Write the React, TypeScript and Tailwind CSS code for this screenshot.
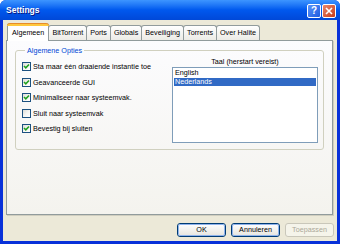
import React from "react";

const font = { fontFamily: '"Liberation Sans", Arial, sans-serif' };

function Check({ checked, label }: { checked: boolean; label: string }) {
  return (
    <div className="flex items-center h-[15.5px]">
      <div className="w-[9px] h-[9px] border border-[#1C5180] bg-gradient-to-br from-[#DCDCD7] via-[#F5F5F2] to-white flex items-center justify-center shrink-0">
        {checked && (
          <svg width="7" height="7" viewBox="0 0 7 7">
            <path d="M1 3 L2.8 4.8 L6 1.5" stroke="#21A121" strokeWidth="1.6" fill="none" />
          </svg>
        )}
      </div>
      <span className="ml-[2px] text-[7.2px] text-black leading-none whitespace-nowrap">{label}</span>
    </div>
  );
}

function Tab({ label, active }: { label: string; active?: boolean }) {
  if (active) {
    return (
      <div className="relative z-10 h-[18px] -mb-[1px] px-[4px] bg-white border-x border-[#919B9C] rounded-t-[3px] flex flex-col">
        <div className="h-[3px] -mx-[5px] bg-[#FFC83C] border-t border-[#E68B2C] rounded-t-[3px]" />
        <div className="flex-1 flex items-center text-[7.2px] text-black leading-none pb-[1px]">{label}</div>
      </div>
    );
  }
  return (
    <div className="h-[15px] px-[3px] bg-gradient-to-b from-white to-[#ECEBE6] border border-b-0 border-[#919B9C] rounded-t-[3px] flex items-center text-[7.2px] text-black leading-none -ml-[1px]">
      {label}
    </div>
  );
}

function Btn({ label, disabled, focus }: { label: string; disabled?: boolean; focus?: boolean }) {
  return (
    <div
      className={
        "w-[49px] h-[14px] rounded-[3px] border flex items-center justify-center text-[7.2px] leading-none " +
        (disabled
          ? "border-[#C9C7BA] bg-[#F5F4EA] text-[#ACA899]"
          : "border-[#003C74] bg-gradient-to-b from-white to-[#E6E5DE] text-black")
      }
    >
      {focus ? (
        <div className="w-full h-full rounded-[2px] border border-[#8FB3EC] flex items-center justify-center">{label}</div>
      ) : (
        label
      )}
    </div>
  );
}

export default function App() {
  return (
    <div style={font} className="w-[340px] h-[244px] flex flex-col bg-[#0831D9] rounded-t-[6px] overflow-hidden">
      <div className="h-[20px] shrink-0 bg-gradient-to-b from-[#3D95FF] via-[#0058EE] to-[#0048D8] flex items-center pl-[6px] pr-[4px]">
        <span className="text-white font-bold text-[8.5px] leading-none" style={{ textShadow: "1px 1px #0A1883" }}>
          Settings
        </span>
        <div className="ml-auto flex gap-[1px] mt-[1px]">
          <div className="w-[14px] h-[14px] rounded-[2px] border border-white bg-gradient-to-br from-[#5B94FA] to-[#1E5BE0] flex items-center justify-center text-white font-bold text-[10px] leading-none">
            ?
          </div>
          <div className="w-[14px] h-[14px] rounded-[2px] border border-white bg-gradient-to-br from-[#E9866A] to-[#C63A12] flex items-center justify-center">
            <svg width="8" height="8" viewBox="0 0 8 8">
              <path d="M1 1 L7 7 M7 1 L1 7" stroke="white" strokeWidth="1.6" />
            </svg>
          </div>
        </div>
      </div>
      <div className="flex-1 mx-[3px] mb-[3px] bg-[#ECE9D8] flex flex-col">
        <div className="flex pl-[4px] mt-[3px] items-end h-[17px]">
          <Tab label="Algemeen" active />
          <Tab label="BitTorrent" />
          <Tab label="Ports" />
          <Tab label="Globals" />
          <Tab label="Beveiliging" />
          <Tab label="Torrents" />
          <Tab label="Over Halite" />
        </div>
        <div className="ml-[3px] mr-[4px] h-[175px] border border-[#919B9C] bg-gradient-to-b from-[#FCFCFE] to-[#F4F3EE] shadow-[1px_1px_0_#D0CEBF] px-[8px] pt-[5px]">
          <fieldset className="border border-[#D0D0BF] rounded-[3px] h-[104px] pl-[6px] pr-[5px] pb-[6px] flex">
            <legend className="ml-[3px] px-[2px] text-[7.2px] text-[#0046D5] leading-[9px]">Algemene Opties</legend>
            <div className="flex gap-[6px] w-full">
              <div className="flex flex-col pt-[4px] w-[144px]">
                <Check checked label="Sta maar één draaiende instantie toe" />
                <Check checked label="Geavanceerde GUI" />
                <Check checked label="Minimaliseer naar systeemvak." />
                <Check checked={false} label="Sluit naar systeemvak" />
                <Check checked label="Bevestig bij sluiten" />
              </div>
              <div className="flex-1 flex flex-col">
                <div className="text-[7.2px] text-black text-center leading-none pt-[3px] h-[12px]">Taal (herstart vereist)</div>
                <div className="flex-1 border border-[#7F9DB9] bg-white p-[1px] text-[7.2px] leading-[8.5px]">
                  <div className="text-black pl-[1px]">English</div>
                  <div className="bg-[#316AC5] text-white pl-[1px]">Nederlands</div>
                </div>
              </div>
            </div>
          </fieldset>
        </div>
        <div className="flex justify-end gap-[5px] mt-[8px] mr-[3px]">
          <Btn label="OK" focus />
          <Btn label="Annuleren" focus />
          <Btn label="Toepassen" disabled />
        </div>
      </div>
    </div>
  );
}
